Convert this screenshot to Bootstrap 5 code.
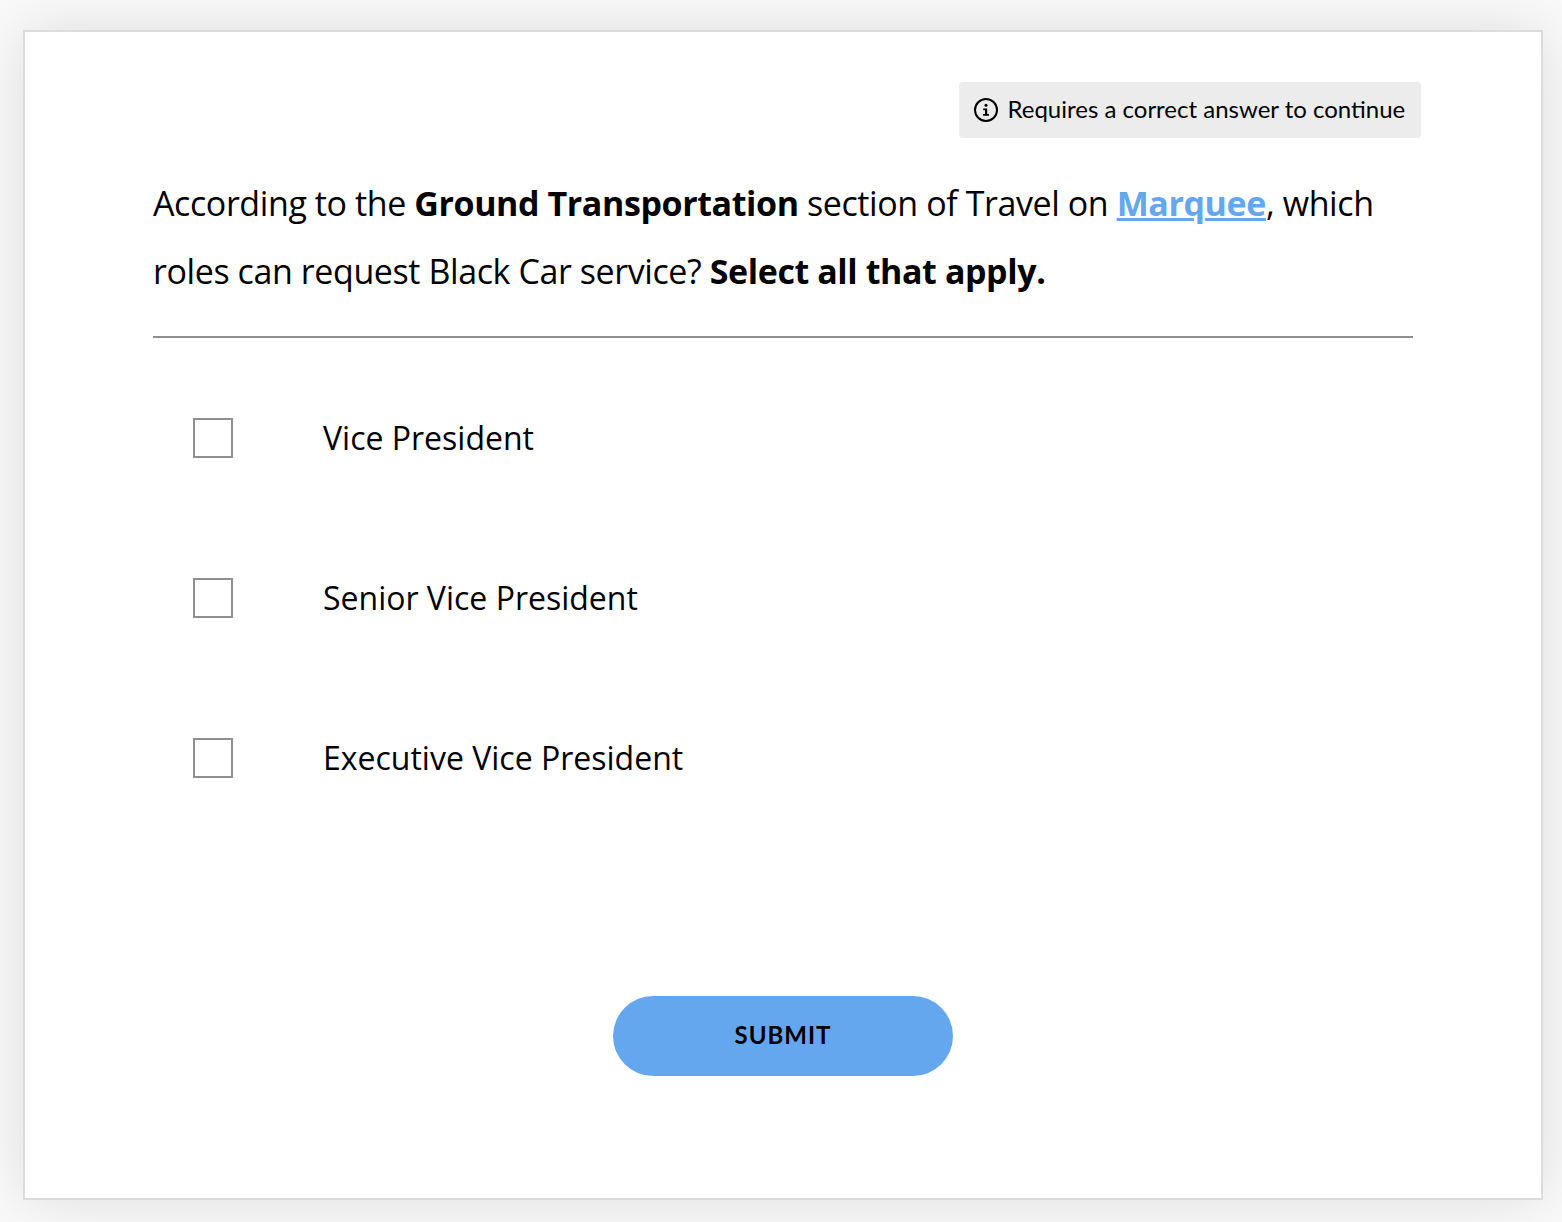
<!DOCTYPE html>
<html lang="en">
<head>
<meta charset="utf-8">
<meta name="viewport" content="width=device-width, initial-scale=1">
<title>Knowledge check</title>
<link href="https://cdn.jsdelivr.net/npm/bootstrap@5.3.0/dist/css/bootstrap.min.css" rel="stylesheet">
<style>
body { background: #fafafa; color: #000; font-family: "Open Sans", sans-serif; height: 1222px; overflow: hidden; padding: 30px 19px 22px 23px; }
.quiz { height: 1170px; border: 2px solid #dcdcdc; border-radius: 0; box-shadow: 0 0 60px rgba(0,0,0,.12); padding: 50px 128px 0; color: #000; }
.notice { height: 56px; width: 462px; margin-right: -8px; padding: 0 15px; gap: 9.5px; background: #ececec; border-radius: 4px; font: 24px Lato, sans-serif; white-space: nowrap; }
.notice span { padding-bottom: 4px; }
.question { font-size: 34px; line-height: 68px; letter-spacing: -.41px; margin-top: 31px; padding-bottom: 31px; border-bottom: 2px solid #8f8f8f; white-space: nowrap; }
.question a { color: #65a7ee; text-decoration-thickness: 3px; }
.choices { padding: 20px 0 0 40px; }
.choice { height: 160px; gap: 90px; font-size: 32px; line-height: 44px; }
.choice .form-check-input { width: 40px; height: 40px; border: 2px solid #8f8f8f; border-radius: 0; }
.submit { width: 340px; height: 80px; margin-top: 158px; padding: 0 0 3px; background: #65a7ee; --bs-btn-color: #000; --bs-btn-hover-color: #000; border: 0; font: 700 24px Lato, sans-serif; letter-spacing: 1px; }
</style>
<script src="https://cdn.jsdelivr.net/npm/bootstrap@5.3.0/dist/js/bootstrap.bundle.min.js" defer></script>
</head>
<body>
<main class="card quiz">
  <div class="notice d-flex align-items-center align-self-end">
    <svg width="24" height="24" viewBox="0 0 24 24" class="flex-shrink-0" aria-hidden="true">
      <circle cx="12" cy="12" r="11" fill="none" stroke="#000" stroke-width="2"/>
      <circle cx="12" cy="7.3" r="1.5"/>
      <path d="M9.2 10.5h4v5.5h1.8v1.8H9.1V16H11v-3.7H9.2z"/>
    </svg>
    <span>Requires a correct answer to continue</span>
  </div>
  <p class="question mb-0">According to the <b>Ground Transportation</b> section of Travel on <a href="#" class="fw-bold">Marquee</a>, which<br>roles can request Black Car service? <b>Select all that apply.</b></p>
  <div class="choices">
    <label class="choice d-flex align-items-center"><input class="form-check-input m-0" type="checkbox"><span>Vice President</span></label>
    <label class="choice d-flex align-items-center"><input class="form-check-input m-0" type="checkbox"><span>Senior Vice President</span></label>
    <label class="choice d-flex align-items-center"><input class="form-check-input m-0" type="checkbox"><span>Executive Vice President</span></label>
  </div>
  <button type="button" class="btn submit rounded-pill align-self-center">SUBMIT</button>
</main>
</body>
</html>
